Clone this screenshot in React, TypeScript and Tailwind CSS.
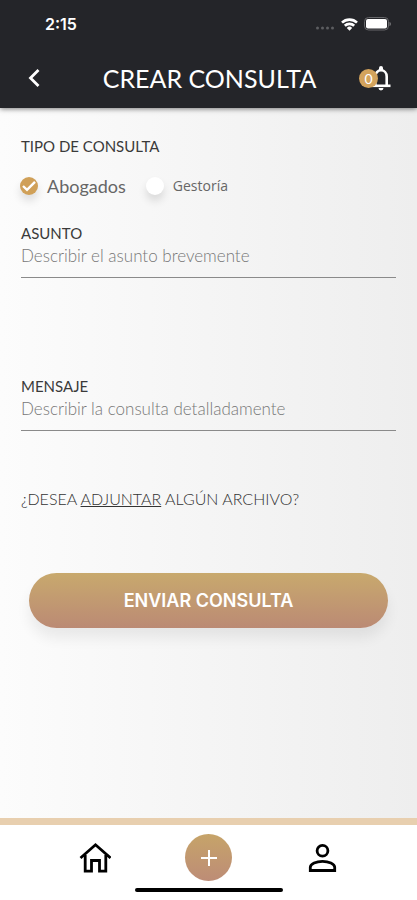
import { useState } from "react";
import { clsx } from "clsx";

const CONSULTATION_TYPES = [
  { id: "abogados", label: "Abogados" },
  { id: "gestoria", label: "Gestoría" },
];

function StatusBar() {
  return (
    <div className="flex h-12 items-center justify-between pl-[45px] pr-[26px]">
      <span className="font-['Inter',sans-serif] text-base font-semibold">
        2:15
      </span>
      <div className="flex items-center gap-[6px]">
        <svg width="20" height="12" viewBox="0 0 20 12" fill="#5d5e61">
          <circle cx="2.5" cy="10" r="1.5" />
          <circle cx="7.5" cy="10" r="1.5" />
          <circle cx="12.5" cy="10" r="1.5" />
          <circle cx="17.5" cy="10" r="1.5" />
        </svg>
        <svg
          width="17"
          height="13"
          viewBox="0 0 17 13"
          fill="none"
          stroke="white"
          strokeWidth="2.6"
        >
          <path d="M1 4.7a10.600 10.600 0 0 1 15 0" />
          <path d="M3.800 7.800a6.700 6.700 0 0 1 9.400 0" />
          <path
            d="M8.500 12.800 5.800 9.900a3.800 3.800 0 0 1 5.400 0z"
            fill="white"
            stroke="none"
          />
        </svg>
        <svg width="27" height="14" viewBox="0 0 27 14">
          <rect
            x="0.5"
            y="0.5"
            width="24"
            height="12.500"
            rx="4"
            fill="none"
            stroke="#66676a"
          />
          <rect x="2" y="2" width="21" height="9.500" rx="2" fill="white" />
          <path d="M25.500 5v4c1-.4 1.400-1.100 1.400-2s-.4-1.600-1.400-2z" fill="#77787a" />
        </svg>
      </div>
    </div>
  );
}

function Header() {
  return (
    <header className="relative z-10 bg-[#242529] text-white shadow-[0_1px_5px_rgba(0,0,0,0.5)]">
      <StatusBar />
      <div className="flex h-[60px] items-center justify-between pl-6 pr-[26px]">
        <button type="button" aria-label="Volver" className="w-9 py-1">
          <svg
            width="20"
            height="20"
            viewBox="0 0 20 20"
            fill="none"
            stroke="currentColor"
            strokeWidth="2.8"
          >
            <path d="M14.500 2 6.500 10l8 8" />
          </svg>
        </button>
        <h1 className="text-[25px] leading-8">CREAR CONSULTA</h1>
        <button
          type="button"
          aria-label="Notificaciones"
          className="relative flex w-8 justify-end"
        >
          <svg width="20" height="26" viewBox="0 0 20 26" fill="none">
            <path
              d="M4.300 21v-9.500c0-3.600 2.500-6.200 5.700-6.200s5.700 2.600 5.700 6.200V21"
              stroke="currentColor"
              strokeWidth="2.600"
            />
            <path d="M.5 20.800h19" stroke="currentColor" strokeWidth="2.600" />
            <path
              d="M8 5.500V3a2 2 0 0 1 4 0v2.500zM7.500 23h5a2.500 2.400 0 0 1-5 0z"
              fill="currentColor"
            />
          </svg>
          <span className="absolute left-0 top-1 flex size-[19px] items-center justify-center rounded-full bg-[#d3a35c] text-sm">
            0
          </span>
        </button>
      </div>
    </header>
  );
}

interface TypeOptionProps {
  id: string;
  label: string;
  checked: boolean;
  onSelect: () => void;
}

function TypeOption({ id, label, checked, onSelect }: TypeOptionProps) {
  return (
    <label
      htmlFor={id}
      className={clsx(
        "flex items-center gap-[9px] text-[#666]",
        checked ? "text-lg" : "font-['Open_Sans',sans-serif] text-sm",
      )}
    >
      <span className="relative size-[18px]">
        <input
          id={id}
          type="radio"
          name="tipo"
          checked={checked}
          onChange={onSelect}
          className="block size-[18px] appearance-none rounded-full bg-white shadow-[0_6px_8px_rgba(0,0,0,0.12)] checked:bg-[#d0a058]"
        />
        {checked && (
          <svg
            width="18"
            height="18"
            viewBox="0 0 18 18"
            fill="none"
            stroke="white"
            strokeWidth="2.400"
            className="pointer-events-none absolute inset-0"
          >
            <path d="m3 9 4 3.800 8-8" />
          </svg>
        )}
      </span>
      {label}
    </label>
  );
}

interface FieldProps {
  id: string;
  label: string;
  placeholder: string;
}

function Field({ id, label, placeholder }: FieldProps) {
  return (
    <div className="flex flex-col">
      <label htmlFor={id} className="text-[15px] leading-5 text-[#3a3a3a]">
        {label}
      </label>
      <input
        id={id}
        type="text"
        placeholder={placeholder}
        className="h-[35px] w-full border-b border-[#8a8a8a] bg-transparent pb-[9px] text-[17px] font-light text-[#3a3a3a] outline-none placeholder:text-[#777]"
      />
    </div>
  );
}

function BottomNav() {
  return (
    <nav className="flex flex-col items-center border-t-[7px] border-[#e8cfaf] bg-white pb-2 pt-[9px]">
      <div className="flex w-full items-center justify-center gap-[74px]">
        <a href="#inicio" aria-label="Inicio">
          <svg
            width="32"
            height="32"
            viewBox="0 0 32 32"
            fill="none"
            stroke="black"
            strokeWidth="2.800"
          >
            <path d="M1.500 16 16.500 2.800 31.500 16" />
            <path d="M6.200 13v16.200h6.300V18.500h8v10.700h6.300V13" />
          </svg>
        </a>
        <button
          type="button"
          aria-label="Nueva consulta"
          className="flex size-[47px] items-center justify-center rounded-full bg-linear-to-b from-[#c6a469] to-[#bd8c76]"
        >
          <svg
            width="18"
            height="18"
            viewBox="0 0 18 18"
            stroke="white"
            strokeWidth="2"
          >
            <path d="M9 1v16M1 9h16" />
          </svg>
        </button>
        <a href="#perfil" aria-label="Perfil">
          <svg
            width="32"
            height="32"
            viewBox="0 0 32 32"
            fill="none"
            stroke="black"
            strokeWidth="2.800"
          >
            <circle cx="16.500" cy="8.800" r="5.400" />
            <path d="M4.300 28.500v-3.300c0-3.400 6-5.900 12.200-5.900s12.200 2.500 12.200 5.900v3.300z" />
          </svg>
        </a>
      </div>
      <div className="mt-[7px] h-1 w-[148px] rounded-full bg-black" />
    </nav>
  );
}

export default function App() {
  const [type, setType] = useState("abogados");

  return (
    <div className="flex min-h-screen flex-col font-['Lato',sans-serif]">
      <Header />

      <main className="flex-1 bg-linear-to-r from-[#fcfcfc] to-[#eeeeee] px-[21px] pt-7">
        <form onSubmit={(e) => e.preventDefault()}>
          <fieldset>
            <legend className="text-[15px] leading-5 text-[#3a3a3a]">
              TIPO DE CONSULTA
            </legend>
            <div className="-ml-px mt-5 flex h-5 items-center gap-5">
              {CONSULTATION_TYPES.map(({ id, label }) => (
                <TypeOption
                  key={id}
                  id={id}
                  label={label}
                  checked={type === id}
                  onSelect={() => setType(id)}
                />
              ))}
            </div>
          </fieldset>

          <div className="mt-[27px] flex flex-col gap-[98px]">
            <Field
              id="asunto"
              label="ASUNTO"
              placeholder="Describir el asunto brevemente"
            />
            <Field
              id="mensaje"
              label="MENSAJE"
              placeholder="Describir la consulta detalladamente"
            />
          </div>

          <p className="mt-[58px] text-base font-light leading-5 text-[#333]">
            ¿DESEA{" "}
            <a href="#adjuntar" className="underline">
              ADJUNTAR
            </a>{" "}
            ALGÚN ARCHIVO?
          </p>

          <div className="mt-16 px-2">
            <button
              type="submit"
              className="h-[55px] w-full rounded-full bg-linear-to-b from-[#c8a96d] to-[#bb8a74] font-['Inter',sans-serif] text-lg font-semibold text-white shadow-[0_10px_14px_rgba(0,0,0,0.07)]"
            >
              ENVIAR CONSULTA
            </button>
          </div>
        </form>
      </main>

      <BottomNav />
    </div>
  );
}
